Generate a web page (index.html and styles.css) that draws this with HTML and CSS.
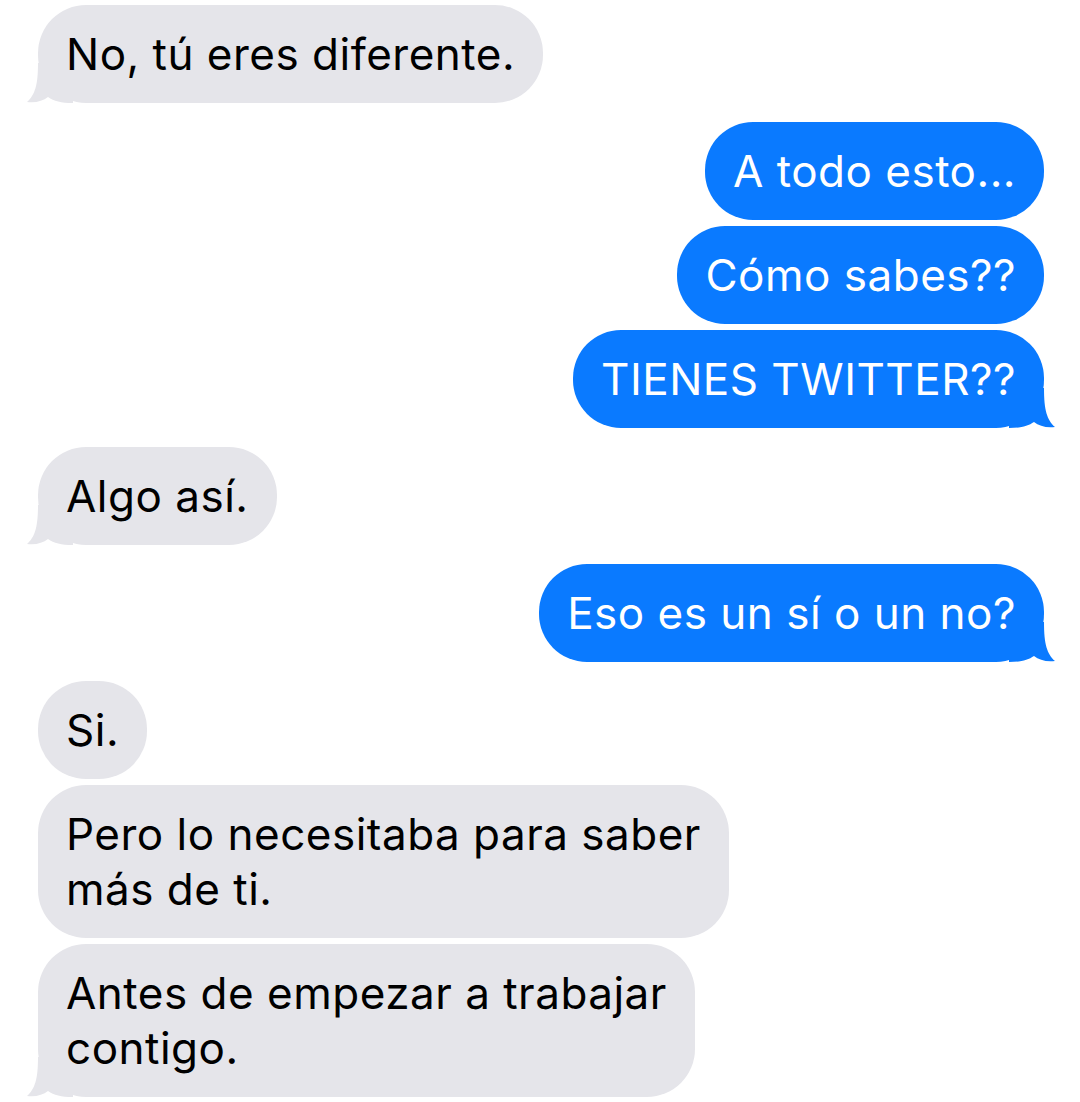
FILE: index.html
```html
<!DOCTYPE html>
<html lang="es">
<head>
<meta charset="utf-8">
<title>Mensajes</title>
<link rel="stylesheet" href="styles.css">
</head>
<body>
<main class="chat">
  <section class="group received">
    <p class="bubble tail">No, tú eres diferente.<svg class="tail-shape" viewBox="0 0 46 40" width="46" height="40"><path d="M11 0 C11 22 8 32 0 39 C9 40 16 38 21 34 C27 38 34 40 46 40 L46 0 Z"/></svg></p>
  </section>
  <section class="group sent">
    <p class="bubble">A todo esto...</p>
    <p class="bubble">Cómo sabes??</p>
    <p class="bubble tail">TIENES TWITTER??<svg class="tail-shape" viewBox="0 0 46 40" width="46" height="40"><path d="M11 0 C11 22 8 32 0 39 C9 40 16 38 21 34 C27 38 34 40 46 40 L46 0 Z"/></svg></p>
  </section>
  <section class="group received">
    <p class="bubble tail">Algo así.<svg class="tail-shape" viewBox="0 0 46 40" width="46" height="40"><path d="M11 0 C11 22 8 32 0 39 C9 40 16 38 21 34 C27 38 34 40 46 40 L46 0 Z"/></svg></p>
  </section>
  <section class="group sent">
    <p class="bubble tail">Eso es un sí o un no?<svg class="tail-shape" viewBox="0 0 46 40" width="46" height="40"><path d="M11 0 C11 22 8 32 0 39 C9 40 16 38 21 34 C27 38 34 40 46 40 L46 0 Z"/></svg></p>
  </section>
  <section class="group received">
    <p class="bubble">Si.</p>
    <p class="bubble">Pero lo necesitaba para saber<br>más de ti.</p>
    <p class="bubble tail">Antes de empezar a trabajar<br>contigo.<svg class="tail-shape" viewBox="0 0 46 40" width="46" height="40"><path d="M11 0 C11 22 8 32 0 39 C9 40 16 38 21 34 C27 38 34 40 46 40 L46 0 Z"/></svg></p>
  </section>
</main>
</body>
</html>
```
FILE: styles.css
```css
html, body {
  margin: 0;
  padding: 0;
  background: #ffffff;
}

.chat {
  display: flex;
  flex-direction: column;
  gap: 19px;
  padding: 5px 36px 0 38px;
  font-family: "Inter", "Noto Sans", "Liberation Sans", sans-serif;
}

.group {
  display: flex;
  flex-direction: column;
  gap: 6px;
}

.received {
  align-items: flex-start;
}

.sent {
  align-items: flex-end;
}

.bubble {
  position: relative;
  z-index: 0;
  margin: 0;
  padding: 22px 28px 21px 28px;
  font-size: 44px;
  line-height: 55px;
  border-radius: 48px;
  letter-spacing: 0.5px;
}

.received .bubble {
  background: #e5e5ea;
  color: #000000;
}

.sent .bubble {
  background: #0a7aff;
  color: #ffffff;
}

.tail-shape {
  position: absolute;
  z-index: -1;
  bottom: 0;
  display: block;
}

.received .tail-shape {
  left: -11px;
  fill: #e5e5ea;
}

.sent .tail-shape {
  right: -11px;
  fill: #0a7aff;
  transform: scaleX(-1);
}
```
